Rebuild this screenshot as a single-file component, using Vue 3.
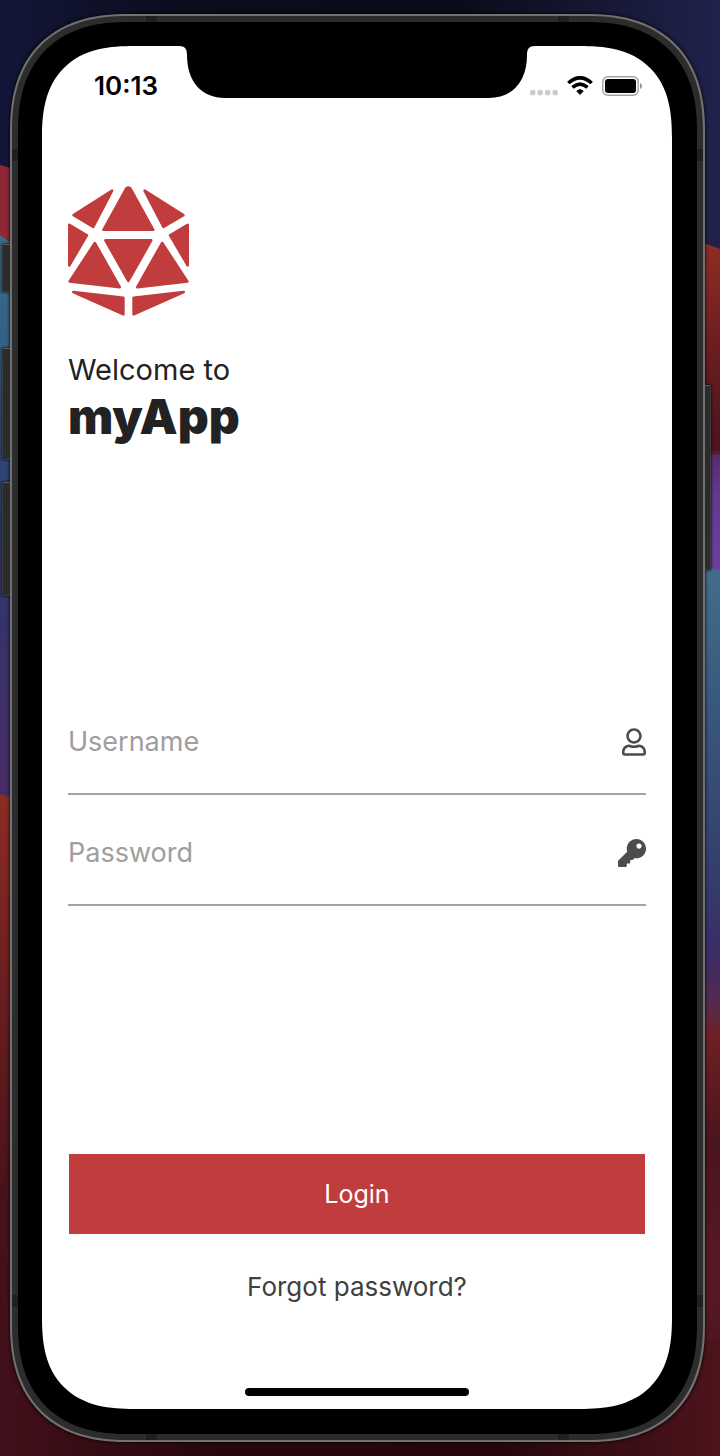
<script setup>
import { ref } from 'vue'

const username = ref('')
const password = ref('')
</script>

<template>
  <div class="desktop">
    <svg class="wallpaper" viewBox="0 0 720 1456" preserveAspectRatio="none" aria-hidden="true">
      <defs>
        <linearGradient id="top" x1="0" x2="1" y1="0" y2="0">
          <stop offset="0" stop-color="#131638" />
          <stop offset="0.25" stop-color="#0b0c1c" />
          <stop offset="0.65" stop-color="#0b0c1a" />
          <stop offset="1" stop-color="#20224c" />
        </linearGradient>
        <linearGradient id="bottom" x1="0" x2="1" y1="0" y2="0">
          <stop offset="0" stop-color="#42101a" />
          <stop offset="0.3" stop-color="#26070b" />
          <stop offset="0.7" stop-color="#25070b" />
          <stop offset="1" stop-color="#4c141b" />
        </linearGradient>
        <linearGradient id="leftCool" x1="0" x2="0" y1="0" y2="1">
          <stop offset="0" stop-color="#3b6c88" />
          <stop offset="0.2" stop-color="#335f84" />
          <stop offset="0.4" stop-color="#2f4474" />
          <stop offset="0.65" stop-color="#35336a" />
          <stop offset="1" stop-color="#4b2a62" />
        </linearGradient>
        <linearGradient id="leftWarm" x1="0" x2="0" y1="0" y2="1">
          <stop offset="0" stop-color="#8c2c24" />
          <stop offset="0.25" stop-color="#6f2020" />
          <stop offset="0.6" stop-color="#48121a" />
          <stop offset="0.9" stop-color="#400f18" />
          <stop offset="1" stop-color="#3a0d12" />
        </linearGradient>
        <linearGradient id="rightRed" x1="0" x2="0" y1="0" y2="1">
          <stop offset="0" stop-color="#922e25" />
          <stop offset="0.5" stop-color="#6c1d20" />
          <stop offset="0.95" stop-color="#4d131e" />
          <stop offset="1" stop-color="#5b2a66" />
        </linearGradient>
        <linearGradient id="rightPurple" x1="0" x2="0" y1="0" y2="1">
          <stop offset="0" stop-color="#582b70" />
          <stop offset="0.3" stop-color="#623890" />
          <stop offset="1" stop-color="#7040a0" />
        </linearGradient>
        <linearGradient id="rightCool" x1="0" x2="0" y1="0" y2="1">
          <stop offset="0" stop-color="#42708a" />
          <stop offset="0.15" stop-color="#3a5a80" />
          <stop offset="0.34" stop-color="#34406f" />
          <stop offset="0.44" stop-color="#3a2c66" />
          <stop offset="0.5" stop-color="#552a4c" />
          <stop offset="0.53" stop-color="#701f25" />
          <stop offset="0.65" stop-color="#4b151d" />
          <stop offset="0.8" stop-color="#561924" />
          <stop offset="1" stop-color="#44121a" />
        </linearGradient>
      </defs>
      <rect width="720" height="300" fill="url(#top)" />
      <polygon points="0,165 40,176 40,270 0,270" fill="#8e2738" />
      <polygon points="0,235 40,265 40,820 0,820" fill="url(#leftCool)" />
      <polygon points="0,794 40,808 40,1456 0,1456" fill="url(#leftWarm)" />
      <polygon points="680,234 720,249 720,460 680,460" fill="url(#rightRed)" />
      <rect x="680" y="455" width="40" height="130" fill="url(#rightPurple)" />
      <polygon points="680,556 720,571 720,1456 680,1456" fill="url(#rightCool)" />
      <rect y="1340" width="720" height="116" fill="url(#bottom)" />
    </svg>

    <div class="phone">
      <i class="key key-mute"></i>
      <i class="key key-up"></i>
      <i class="key key-down"></i>
      <i class="key key-power"></i>
      <div class="rail">
        <i class="band band-v band-a"></i>
        <i class="band band-v band-b"></i>
        <i class="band band-h band-c"></i>
        <i class="band band-h band-d"></i>
        <div class="bezel">
          <div class="screen">
            <svg class="notch" width="356" height="52" viewBox="0 0 356 52" aria-hidden="true">
              <path d="M0 0C6 0 8 3 8 9C8 36 23 52 46 52H310C333 52 348 36 348 9C348 3 350 0 356 0Z" fill="#000" />
            </svg>

            <header class="status">
              <time class="clock">10:13</time>
              <div class="indicators">
                <svg class="dots" width="28" height="6" viewBox="0 0 28 6" aria-hidden="true">
                  <g fill="#cbcbcb">
                    <rect x="0" y="0" width="5.4" height="5.2" rx="1.6" />
                    <rect x="7.5" y="0" width="5.4" height="5.2" rx="1.6" />
                    <rect x="15" y="0" width="5.4" height="5.2" rx="1.6" />
                    <rect x="22.5" y="0" width="5.4" height="5.2" rx="1.6" />
                  </g>
                </svg>
                <svg width="26" height="20" viewBox="0 0 26 20" aria-hidden="true">
                  <g fill="none" stroke="#000" stroke-width="3.6">
                    <path d="M1.3 7Q13 -3.4 24.7 7" />
                    <path d="M5.5 11.4Q13 5 20.5 11.4" />
                  </g>
                  <path d="M9.7 15Q13 12 16.3 15L13 18.6Z" fill="#000" stroke="#000" stroke-width="0.8" stroke-linejoin="round" />
                </svg>
                <svg width="41" height="20" viewBox="0 0 41 20" aria-hidden="true">
                  <rect x="0.8" y="0.8" width="35.4" height="18.4" rx="5" fill="none" stroke="#a2a2a2" stroke-width="1.5" />
                  <rect x="3" y="3" width="31" height="14" rx="3" fill="#000" />
                  <path d="M38 7C40.8 7.8 40.8 12.2 38 13Z" fill="#999" />
                </svg>
              </div>
            </header>

            <form class="login" @submit.prevent>
              <section class="hero">
                <svg class="logo" width="122" height="130" viewBox="53 48 368 390" role="img" aria-label="myApp logo">
                  <g fill="#c13c3d" stroke="#c13c3d" stroke-width="8" stroke-linejoin="round">
                    <path d="M229 54Q235 50 241 54L310 179H160Z" />
                    <path d="M186 61L70 135L129 170Z" />
                    <path d="M284 61L401 135L341 170Z" />
                    <path d="M57 164L110 196L57 286Z" />
                    <path d="M414 164L361 196L414 286Z" />
                    <path d="M166 211H304L235 333Z" />
                    <path d="M134 219L58 335L209 352Z" />
                    <path d="M337 219L413 335L262 352Z" />
                    <path d="M69 367L220 384V434Z" />
                    <path d="M402 367L251 384V434Z" />
                  </g>
                </svg>
                <h1 class="title">
                  <span class="welcome">Welcome to</span>
                  <span class="name">myApp</span>
                </h1>
              </section>

              <div class="fields">
                <div class="field">
                  <input id="username" v-model="username" type="text" placeholder="Username" aria-label="Username" autocomplete="username" />
                  <label for="username" aria-label="Username">
                    <svg width="24" height="28" viewBox="0 0 448 512" aria-hidden="true">
                      <path fill="#4c4c4c" d="M313.6 304c-28.7 0-42.5 16-89.6 16-47.1 0-60.8-16-89.6-16C60.2 304 0 364.2 0 438.4V464c0 26.5 21.5 48 48 48h352c26.5 0 48-21.5 48-48v-25.6c0-74.2-60.2-134.4-134.4-134.4zM400 464H48v-25.6c0-47.6 38.8-86.4 86.4-86.4 14.6 0 38.3 16 89.6 16 51.7 0 74.9-16 89.6-16 47.6 0 86.4 38.8 86.4 86.4V464zM224 288c79.5 0 144-64.5 144-144S303.5 0 224 0 80 64.5 80 144s64.5 144 144 144zm0-240c52.9 0 96 43.1 96 96s-43.1 96-96 96-96-43.1-96-96 43.1-96 96-96z" />
                    </svg>
                  </label>
                </div>
                <div class="field">
                  <input id="password" v-model="password" type="password" placeholder="Password" aria-label="Password" autocomplete="current-password" />
                  <label for="password" aria-label="Password">
                    <svg width="28" height="28" viewBox="0 0 512 512" aria-hidden="true">
                      <path fill="#4c4c4c" d="M512 176.001C512 273.203 433.202 352 336 352c-11.22 0-22.19-1.062-32.827-3.069l-24.012 27.014A23.999 23.999 0 0 1 261.223 384H224v40c0 13.255-10.745 24-24 24h-40v40c0 13.255-10.745 24-24 24H24c-13.255 0-24-10.745-24-24v-78.059c0-6.365 2.529-12.47 7.029-16.971l161.802-161.802C163.108 213.814 160 195.271 160 176 160 78.798 238.797.001 335.999 0 433.488-.001 512 78.511 512 176.001zM336 128c0 26.51 21.49 48 48 48s48-21.49 48-48-21.49-48-48-48-48 21.49-48 48z" />
                    </svg>
                  </label>
                </div>
              </div>

              <div class="actions">
                <button class="submit" type="submit">Login</button>
                <a class="forgot" href="#forgot">Forgot password?</a>
              </div>
            </form>
            <i class="home"></i>
          </div>
        </div>
      </div>
    </div>
  </div>
</template>

<style>
body {
  margin: 0;
}
</style>

<style scoped>
* {
  box-sizing: border-box;
}

.desktop {
  position: relative;
  display: flex;
  min-height: 100vh;
  padding: 14px 15px 14px 10px;
  background: #0b0c1c;
  font-family: Inter, "Liberation Sans", sans-serif;
  color: #222;
}

.wallpaper {
  position: absolute;
  inset: 0;
  width: 100%;
  height: 100%;
}

.phone {
  position: relative;
  display: flex;
  flex: 1;
  border-radius: 108px;
  box-shadow: 0 0 3px 1px rgba(0, 0, 0, 0.6);
}

.rail {
  position: relative;
  display: flex;
  flex: 1;
  padding: 6px;
  border: 2px solid #717171;
  border-radius: 108px;
  background: #2c2c2c;
}

.bezel {
  position: relative;
  display: flex;
  flex: 1;
  padding: 24px 25px 25px 24px;
  border-radius: 100px;
  background: #000;
}

.screen {
  position: relative;
  display: flex;
  flex: 1;
  flex-direction: column;
  border-radius: 80px;
  background: #fff;
}

@supports (corner-shape: superellipse(1.3)) {
  .phone,
  .rail {
    border-radius: 118px;
    corner-shape: superellipse(1.25);
  }

  .bezel {
    border-radius: 110px;
    corner-shape: superellipse(1.25);
  }

  .screen {
    border-radius: 92px;
    corner-shape: superellipse(1.35);
  }
}

.key {
  position: absolute;
  left: -8px;
  width: 10px;
  border: 1px solid #3c3c3c;
  border-top-color: #5a5a5a;
  border-radius: 2px;
  background: #2b2b2b;
  box-shadow: 0 0 2px 1px rgba(0, 0, 0, 0.5);
}

.key-mute {
  top: 230px;
  height: 48px;
}

.key-up {
  top: 334px;
  height: 112px;
}

.key-down {
  top: 468px;
  height: 114px;
}

.key-power {
  top: 371px;
  right: -6px;
  left: auto;
  height: 185px;
}

.band {
  position: absolute;
  background: #1f1f1f;
}

.band-v {
  top: 0;
  bottom: 0;
  width: 11px;
}

.band-h {
  right: 0;
  left: 0;
  height: 12px;
}

.band-a {
  left: 134px;
}

.band-b {
  right: 134px;
}

.band-c {
  top: 133px;
}

.band-d {
  bottom: 133px;
}

.notch {
  position: absolute;
  top: 0;
  left: 50%;
  margin-left: -178px;
}

.status {
  display: flex;
  align-items: center;
  justify-content: space-between;
  height: 80px;
  padding: 0 29px 0 52px;
}

.clock {
  font-size: 26px;
  font-weight: 600;
  line-height: 32px;
  color: #000;
}

.indicators {
  display: flex;
  align-items: center;
  gap: 9px;
}

.dots {
  align-self: flex-end;
}

.login {
  display: flex;
  flex: 1;
  flex-direction: column;
  padding: 60px 26px 104px;
}

.hero {
  flex: 9 0 auto;
}

.logo {
  display: block;
  margin-bottom: 36px;
}

.title {
  display: flex;
  flex-direction: column;
  margin: 0;
}

.welcome {
  font-size: 29px;
  font-weight: 400;
  line-height: 36px;
}

.name {
  font-size: 48px;
  font-weight: 900;
  line-height: 58px;
}

.fields {
  display: flex;
  flex: 8 0 auto;
  flex-direction: column;
  gap: 40px;
}

.field {
  display: flex;
  align-items: center;
  padding-bottom: 33px;
  border-bottom: 2px solid #a3a3a3;
}

.field input {
  flex: 1;
  min-width: 0;
  height: 36px;
  padding: 0;
  border: 0;
  outline: 0;
  background: transparent;
  font: inherit;
  font-size: 27px;
  line-height: 36px;
  color: #222;
}

.field input::placeholder {
  color: #9e9e9e;
  opacity: 1;
}

.field svg {
  display: block;
}

.actions {
  display: flex;
  flex-direction: column;
  align-items: center;
  gap: 35px;
  padding: 0 1px;
}

.submit {
  align-self: stretch;
  height: 80px;
  padding: 0 0 1px;
  border: 0;
  background: #c13c3d;
  font: inherit;
  font-size: 25px;
  color: #fff;
}

.forgot {
  font-size: 26px;
  line-height: 36px;
  color: #404040;
  text-decoration: none;
}

.home {
  position: absolute;
  bottom: 13px;
  left: 50%;
  width: 224px;
  height: 8px;
  margin-left: -112px;
  border-radius: 4px;
  background: #000;
}
</style>
